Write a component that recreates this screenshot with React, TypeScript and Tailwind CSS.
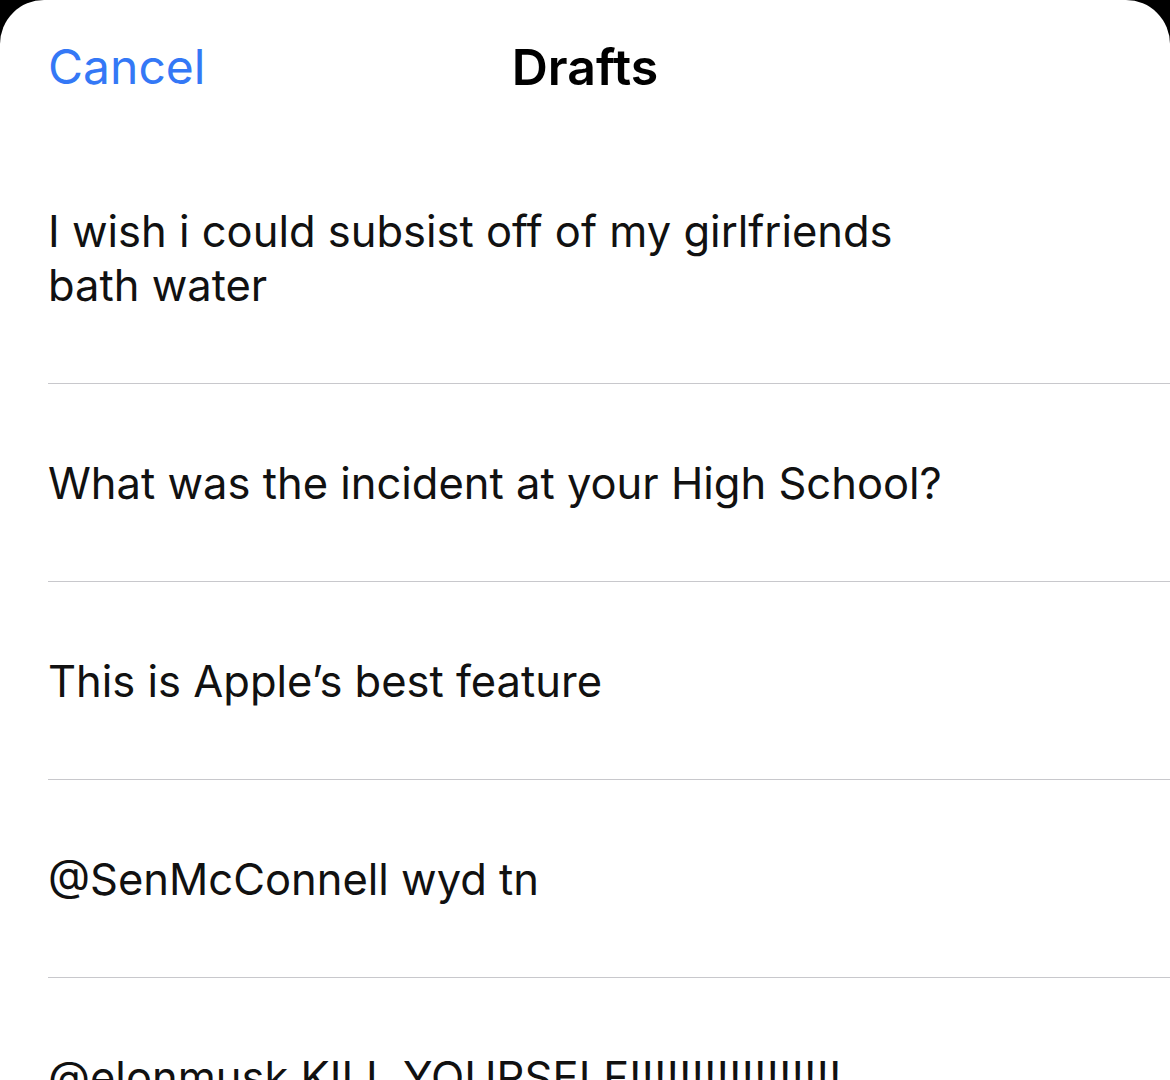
import React from "react";

const rows: React.ReactNode[] = [
  <>I wish i could subsist off of my girlfriends<br />bath water</>,
  <>What was the incident at your High School?</>,
  <>This is Apple’s best feature</>,
  <>@SenMcConnell wyd tn</>,
  <>@elonmusk KILL YOURSELF!!!!!!!!!!!!!!!!!</>,
];

export default function App() {
  return (
    <div className="w-[1170px] h-[1080px] overflow-hidden bg-black" style={{ fontFamily: "Inter, 'Noto Sans', sans-serif" }}>
      <div className="bg-white rounded-t-[44px] h-full">
        <div className="relative h-[132px] pt-[39px] flex justify-center">
          <button className="absolute left-[48px] top-[39px] text-[48px] leading-[56px] text-[#3478f6]">Cancel</button>
          <div className="text-[50px] font-semibold text-black leading-[56px]">Drafts</div>
        </div>
        <div className="flex flex-col">
          {rows.map((r, i) => (
            <div key={i} className="pl-[48px]">
              <div className="border-b border-[#c8c8cc] pt-[72px] pb-[71px]">
                <div className="text-[43.5px] leading-[54px] text-[#111111]">{r}</div>
              </div>
            </div>
          ))}
        </div>
      </div>
    </div>
  );
}
